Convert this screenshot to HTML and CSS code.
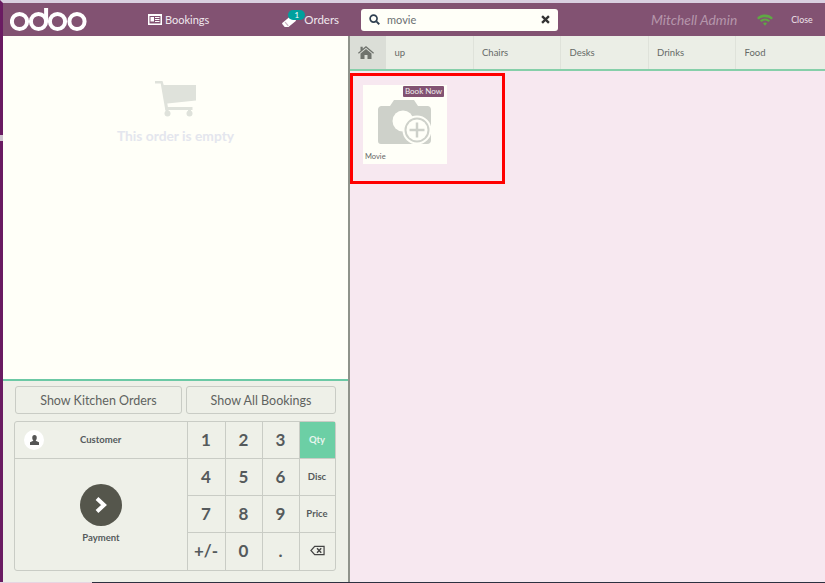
FILE: index.html
```html
<!DOCTYPE html>
<html lang="en">
<head>
  <meta charset="UTF-8" />
  <title>Point of Sale</title>
  <link rel="stylesheet" href="styles.css">
</head>
<body>
  <div class="screen">
    <header class="topbar">
      <svg class="logo" viewBox="0 0 78 26" width="78" height="26">
        <g fill="none" stroke="#fff" stroke-width="4">
          <circle cx="9.500" cy="14.500" r="7.600"/>
          <circle cx="28.500" cy="14.500" r="7.600"/>
          <path d="M36.100 1v13.500"/>
          <circle cx="47.500" cy="14.500" r="7.600"/>
          <circle cx="67" cy="14.500" r="7.600"/>
        </g>
      </svg>
      <div class="nav-item bookings">
        <svg viewBox="0 0 14 11" width="14" height="11"><path fill="#fff" fill-rule="evenodd" d="M0 0h14v11H0zM1.500 2v7.500h11V2zM2.500 3h3.500v4.500H2.500zM7 3h4.500v1H7zM7 5h4.500v1H7zM7 7h4.500v1H7z"/></svg>
        <span>Bookings</span>
      </div>
      <div class="nav-item orders">
        <svg viewBox="0 0 14 14" width="14" height="14"><g transform="rotate(-40 7 9)"><rect x="0.500" y="5.500" width="13" height="7" rx="1" fill="#fff"/><path d="M4 6.500v5" stroke="#c9b3c2" stroke-width="1.200"/></g></svg>
        <span class="count">1</span>
        <span>Orders</span>
      </div>
      <div class="search">
        <svg viewBox="0 0 12 12" width="11" height="11"><circle cx="5" cy="5" r="3.800" fill="none" stroke="#2f4050" stroke-width="1.800"/><path d="m8 8 3.200 3.200" stroke="#2f4050" stroke-width="2"/></svg>
        <span class="search-text">movie</span>
        <svg class="clear" viewBox="0 0 10 10" width="9" height="9"><path d="m1.200 1.200 7.600 7.600M8.800 1.200 1.200 8.800" stroke="#333" stroke-width="2.600"/></svg>
      </div>
      <div class="admin">Mitchell Admin</div>
      <svg class="wifi" viewBox="0 0 16 12" width="16" height="12"><path fill="#5fa844" d="M0 4C4-.6 12-.6 16 4l-1.700 1.600C11.500 2.300 4.500 2.300 1.700 5.600zM3 6.600c2.800-2.900 7.200-2.900 10 0l-1.600 1.500c-2-2-4.800-2-6.800 0zM6 9.200c1.200-1 2.800-1 4 0l-2 2.500z"/></svg>
      <div class="close">Close</div>
    </header>

    <div class="main">
      <section class="left">
        <div class="order">
          <svg class="cart" viewBox="0 0 41 36" width="41" height="36"><path d="M0 0h7.500l1.200 4H41v15.500L12.300 22.500l.6 3.500H37.500v3H10.300L5.700 2.500H0z"/><path d="M10.500 28h3v2h-3zM33 28h3v2h-3z"/><circle cx="12.500" cy="32.500" r="3"/><circle cx="34.500" cy="32.500" r="3"/></svg>
          <p class="empty">This order is empty</p>
        </div>
        <div class="controls">
          <div class="actions">
            <button class="action kitchen">Show Kitchen Orders</button>
            <button class="action all">Show All Bookings</button>
          </div>
          <div class="pad">
            <div class="pad-left">
              <div class="customer">
                <span class="avatar">
                  <svg viewBox="0 0 10 11" width="9" height="10"><path fill="#555" d="M2.500 3a2.500 3 0 0 1 5 0c0 1.500-.6 2.500-1.200 3.200L10 8v3H0V8l3.700-1.800C3.100 5.500 2.500 4.500 2.500 3z"/></svg>
                </span>
                <span class="customer-name">Customer</span>
              </div>
              <div class="payment">
                <span class="pay-circle">
                  <svg viewBox="0 0 14 18" width="14" height="18"><path d="m3 2.500 7 6.500-7 6.500" fill="none" stroke="#fff" stroke-width="4"/></svg>
                </span>
                <span class="pay-label">Payment</span>
              </div>
            </div>
            <div class="keys">
              <div class="key">1</div>
              <div class="key">2</div>
              <div class="key">3</div>
              <div class="key mode active">Qty</div>
              <div class="key">4</div>
              <div class="key">5</div>
              <div class="key">6</div>
              <div class="key mode">Disc</div>
              <div class="key">7</div>
              <div class="key">8</div>
              <div class="key">9</div>
              <div class="key mode">Price</div>
              <div class="key">+/-</div>
              <div class="key">0</div>
              <div class="key">.</div>
              <div class="key mode">
                <svg viewBox="0 0 16 11" width="15" height="11"><path fill="none" stroke="#444" stroke-width="1.300" d="M5 1h10v9H5L1 5.500z"/><path stroke="#444" stroke-width="1.500" d="m7.500 3 4.500 5M12 3 7.500 8"/></svg>
              </div>
            </div>
          </div>
        </div>
      </section>

      <section class="right">
        <nav class="tabs">
          <div class="tab home">
            <svg viewBox="0 0 16 13" width="16" height="13"><path fill="#6f736d" d="M8 0 16 6.700l-.8 1L8 1.800.8 7.700 0 6.700l2.500-2V.8h2.200v2zM8 3l5.500 4.600V13H9.500V9h-3v4H2.500V7.600z"/></svg>
          </div>
          <div class="tab first">up</div>
          <div class="tab">Chairs</div>
          <div class="tab">Desks</div>
          <div class="tab">Drinks</div>
          <div class="tab last">Food</div>
        </nav>
        <div class="products">
          <div class="highlight">
            <div class="card">
              <span class="book-now">Book Now</span>
              <svg class="camera" viewBox="0 0 54 47" width="54" height="47"><path fill="#ced1ca" d="M3 8h9l4-6h20l4 6h10a4 4 0 0 1 3 4v30a4 4 0 0 1-4 4H3a3 3 0 0 1-3-3V12a4 4 0 0 1 3-4z"/><circle cx="25" cy="23" r="10.500" fill="#fffff8"/><circle cx="39" cy="32" r="13.500" fill="#ced1ca" stroke="#fffff8" stroke-width="2"/><circle cx="39" cy="32" r="10.500" fill="#fffff8"/><path d="M39 24.500v15M31.500 32h15" stroke="#ced1ca" stroke-width="2.500"/></svg>
              <span class="card-name">Movie</span>
            </div>
          </div>
        </div>
      </section>
    </div>
  </div>
  <div class="bottom-edge"></div>
  <span class="edge-mark"></span>
</body>
</html>
```

FILE: styles.css
```css
* {
  box-sizing: border-box;
}

html, body {
  margin: 0;
  height: 100%;
  overflow: hidden;
}

body {
  font-family: 'Lato', sans-serif;
  color: #555;
  background: #fff;
  position: relative;
}

.screen {
  width: 825px;
  height: 582px;
  border-left: 3px solid #6a1b62;
  border-top: 3px solid #d9cfe0;
  display: flex;
  flex-direction: column;
}

.bottom-edge {
  height: 1px;
  background: linear-gradient(to right, #e6d5e2 92px, #2d3040 92px);
}

.edge-mark {
  position: absolute;
  left: 0;
  top: 135px;
  width: 3px;
  height: 6px;
  background: #cfc3cf;
}

/* top bar */
.topbar {
  height: 33px;
  flex: none;
  background: #825272;
  display: flex;
  align-items: center;
  color: #fff;
  font-size: 13px;
}

.logo {
  margin-left: 7px;
  flex: none;
}

.nav-item {
  display: flex;
  align-items: center;
  color: #f0e8ee;
}

.bookings {
  margin-left: 60px;
  gap: 3px;
  font-size: 11px;
}

.orders {
  margin-left: 73px;
  font-size: 11.500px;
  position: relative;
  gap: 8px;
}

.count {
  position: absolute;
  left: 6px;
  top: -3px;
  width: 17px;
  height: 10px;
  border-radius: 8px;
  background: #00a09d;
  color: #fff;
  font-size: 8px;
  line-height: 10px;
  text-align: center;
}

.search {
  margin-left: 22px;
  width: 197px;
  height: 22px;
  background: #fffff8;
  border-radius: 3px;
  display: flex;
  align-items: center;
  padding: 0 8px;
  font-size: 11px;
  color: #6b6f72;
  gap: 7px;
}

.clear {
  margin-left: auto;
}

.admin {
  margin-left: 93px;
  font-size: 13.800px;
  font-style: italic;
  color: #b596ab;
}

.wifi {
  margin-left: 20px;
}

.close {
  margin-left: 18px;
  font-size: 8.800px;
  color: #eee3ea;
}

/* panes */
.main {
  flex: 1;
  display: flex;
  min-height: 0;
}

.left {
  width: 347px;
  flex: none;
  display: flex;
  flex-direction: column;
  border-right: 2px solid #8f938b;
}

.order {
  height: 345px;
  flex: none;
  background: #fffff8;
  border-bottom: 2px solid #6cc9a5;
  display: flex;
  flex-direction: column;
  align-items: center;
  padding-top: 45px;
}

.cart {
  fill: #dfe2db;
}

.empty {
  margin: 10px 0 0;
  font-size: 13.800px;
  font-weight: 700;
  color: #e4e6ee;
}

.controls {
  flex: 1;
  background: #eef0e8;
  padding: 5px 11px 0 12px;
}

.actions {
  display: flex;
  gap: 4px;
}

.action {
  height: 28px;
  font-family: inherit;
  font-size: 12.500px;
  color: #5f6360;
  background: #eef0e8;
  border: 1px solid #c9ccc5;
  border-radius: 3px;
  padding: 0;
}

.kitchen {
  width: 167px;
}

.all {
  width: 150px;
}

.pad {
  margin: 7px 0 0 -1px;
  width: 322px;
  height: 150px;
  border: 1px solid #c9ccc5;
  border-radius: 3px;
  display: flex;
}

.pad-left {
  width: 173px;
  flex: none;
  display: flex;
  flex-direction: column;
  border-right: 1px solid #c9ccc5;
}

.customer {
  height: 37px;
  flex: none;
  border-bottom: 1px solid #c9ccc5;
  display: flex;
  align-items: center;
  padding-left: 9px;
}

.avatar {
  width: 20px;
  height: 20px;
  border-radius: 50%;
  background: #fff;
  display: flex;
  align-items: center;
  justify-content: center;
}

.customer-name {
  margin: 0 0 2px 36px;
  font-size: 9.500px;
  font-weight: 700;
  color: #555a5c;
}

.payment {
  flex: 1;
  display: flex;
  flex-direction: column;
  align-items: center;
  padding-top: 25px;
  gap: 6px;
}

.pay-circle {
  width: 42px;
  height: 42px;
  border-radius: 50%;
  background: #55564c;
  display: flex;
  align-items: center;
  justify-content: center;
}

.pay-label {
  font-size: 9.500px;
  font-weight: 700;
  color: #555a5c;
}

.keys {
  flex: 1;
  display: grid;
  grid-template-columns: 38px 37px 37px 1fr;
  grid-template-rows: repeat(4, 1fr);
}

.key {
  display: flex;
  align-items: center;
  justify-content: center;
  padding: 0 1px 2px 0;
  font-size: 17px;
  font-weight: 700;
  color: #555a5c;
  border-right: 1px solid #c9ccc5;
  border-bottom: 1px solid #c9ccc5;
}

.key:nth-child(4n) {
  border-right: none;
}

.key:nth-last-child(-n+4) {
  border-bottom: none;
}

.key.mode {
  font-size: 9.500px;
}

.key.active {
  background: #6ccfa5;
  color: #e8f5ee;
}

/* categories and products */
.right {
  flex: 1;
  display: flex;
  flex-direction: column;
  min-width: 0;
}

.tabs {
  height: 35px;
  flex: none;
  display: flex;
  background: #ebeee6;
  border-bottom: 2px solid #86cfa9;
}

.tab {
  width: 87.500px;
  flex: none;
  display: flex;
  align-items: center;
  padding-left: 8.500px;
  font-size: 9.500px;
  color: #666a67;
  border-right: 1px solid #dfe2da;
}

.tab.home {
  width: 36px;
  padding-left: 8px;
  background: #dbded7;
  border-right: none;
}

.tab.last {
  border-right: none;
}

.products {
  flex: 1;
  background: #f7e8f0;
  padding: 2px 0 0;
}

.highlight {
  width: 155px;
  height: 111px;
  border: 3px solid #f00;
  padding: 9px 0 0 10px;
}

.card {
  width: 84px;
  height: 79px;
  background: #fffff8;
  position: relative;
  padding: 13px 0 0 15px;
}

.camera {
  display: block;
}

.book-now {
  position: absolute;
  top: 1px;
  right: 3px;
  width: 41px;
  height: 11px;
  background: #825272;
  border-radius: 1px;
  color: #eee;
  font-size: 8px;
  line-height: 11px;
  text-align: center;
}

.card-name {
  position: absolute;
  left: 2px;
  bottom: 3px;
  font-size: 7.500px;
  color: #666;
}
```
